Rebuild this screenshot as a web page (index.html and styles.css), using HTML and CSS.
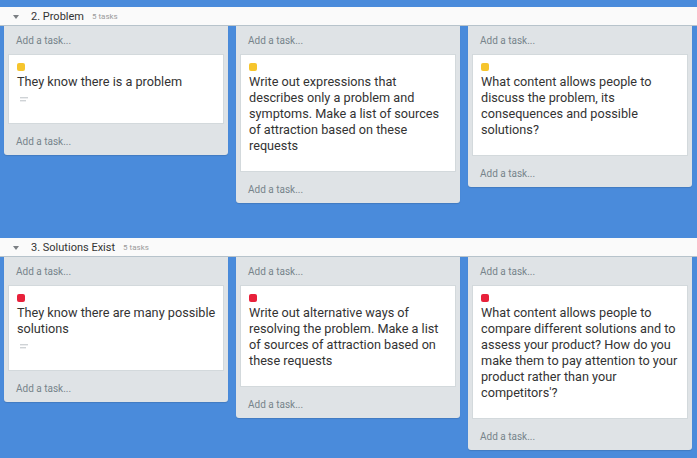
FILE: index.html
```html
<!DOCTYPE html>
<html>
<head>
<meta charset="utf-8">
<link rel="stylesheet" href="styles.css">
</head>
<body>
<section class="section">
  <div class="section-header">
    <span class="caret"></span>
    <span class="section-title">2. Problem</span>
    <span class="section-count">5 tasks</span>
  </div>
  <div class="columns">
    <div class="column">
      <div class="add add-top">Add a task...</div>
      <div class="card">
        <span class="label label-yellow"></span>
        <div class="card-text">They know there is a problem</div>
        <div class="card-icons">
          <svg width="9" height="6" viewBox="0 0 9 6"><rect x="0" y="0" width="8" height="1.4" fill="#cfd3d6"/><rect x="0" y="3" width="6" height="1.4" fill="#cfd3d6"/></svg>
        </div>
      </div>
      <div class="add add-bottom">Add a task...</div>
    </div>
    <div class="column">
      <div class="add add-top">Add a task...</div>
      <div class="card">
        <span class="label label-yellow"></span>
        <div class="card-text">Write out expressions that describes only a problem and symptoms. Make a list of sources of attraction based on these requests</div>
      </div>
      <div class="add add-bottom">Add a task...</div>
    </div>
    <div class="column">
      <div class="add add-top">Add a task...</div>
      <div class="card">
        <span class="label label-yellow"></span>
        <div class="card-text">What content allows people to discuss the problem, its consequences and possible solutions?</div>
      </div>
      <div class="add add-bottom">Add a task...</div>
    </div>
  </div>
</section>
<section class="section">
  <div class="section-header">
    <span class="caret"></span>
    <span class="section-title">3. Solutions Exist</span>
    <span class="section-count">5 tasks</span>
  </div>
  <div class="columns">
    <div class="column">
      <div class="add add-top">Add a task...</div>
      <div class="card">
        <span class="label label-red"></span>
        <div class="card-text">They know there are many possible solutions</div>
        <div class="card-icons">
          <svg width="9" height="6" viewBox="0 0 9 6"><rect x="0" y="0" width="8" height="1.4" fill="#cfd3d6"/><rect x="0" y="3" width="6" height="1.4" fill="#cfd3d6"/></svg>
        </div>
      </div>
      <div class="add add-bottom">Add a task...</div>
    </div>
    <div class="column">
      <div class="add add-top">Add a task...</div>
      <div class="card">
        <span class="label label-red"></span>
        <div class="card-text">Write out alternative ways of resolving the problem. Make a list of sources of attraction based on these requests</div>
      </div>
      <div class="add add-bottom">Add a task...</div>
    </div>
    <div class="column">
      <div class="add add-top">Add a task...</div>
      <div class="card">
        <span class="label label-red"></span>
        <div class="card-text">What content allows people to compare different solutions and to assess your product? How do you make them to pay attention to your product rather than your competitors'?</div>
      </div>
      <div class="add add-bottom">Add a task...</div>
    </div>
  </div>
</section>
</body>
</html>
```
FILE: styles.css
```css
html, body {
  margin: 0;
  padding: 0;
}
body {
  background: #4a8bdb;
  font-family: Roboto, "Liberation Sans", Arial, sans-serif;
  padding-top: 7px;
  box-sizing: border-box;
  height: 458px;
  overflow: hidden;
}
.section {
  margin-bottom: 35px;
}
.section:last-child {
  margin-bottom: 0;
}
.section-header {
  height: 18px;
  background: #fafafa;
  border-bottom: 1px solid #b7c3cb;
  display: flex;
  align-items: center;
  padding-left: 13px;
}
.caret {
  width: 0;
  height: 0;
  border-left: 3.5px solid transparent;
  border-right: 3.5px solid transparent;
  border-top: 4px solid #7b7f83;
  margin-right: 12px;
  margin-top: 1px;
}
.section-title {
  font-size: 11px;
  color: #333;
}
.section-count {
  font-size: 8px;
  color: #9a9a9a;
  margin-left: 8px;
}
.columns {
  display: flex;
  align-items: flex-start;
  gap: 8px;
  padding: 0 4px;
}
.column {
  width: 216px;
  background: #dfe3e6;
  padding: 0 4px;
  border-radius: 0 0 3px 3px;
  box-shadow: 0 1px 1px rgba(0, 0, 0, 0.12);
}
.add {
  font-size: 10px;
  line-height: 16px;
  color: #77838b;
  padding-left: 8px;
}
.add-top {
  padding-top: 7px;
  padding-bottom: 5px;
}
.add-bottom {
  padding-top: 10px;
  padding-bottom: 5px;
}
.card {
  background: #fff;
  border: 1px solid #d3d9dc;
  padding: 8px 4px 17px 8px;
}
.label {
  display: block;
  width: 8px;
  height: 8px;
  border-radius: 2px;
  margin-bottom: 3px;
}
.label-yellow {
  background: #f6c52d;
}
.label-red {
  background: #e8213b;
}
.card-text {
  font-size: 12.7px;
  line-height: 16px;
  color: #333;
}
.card-icons {
  height: 16px;
  display: flex;
  align-items: center;
  padding-left: 3px;
  padding-top: 3px;
  box-sizing: border-box;
}
.card-icons svg {
  display: block;
}
```
